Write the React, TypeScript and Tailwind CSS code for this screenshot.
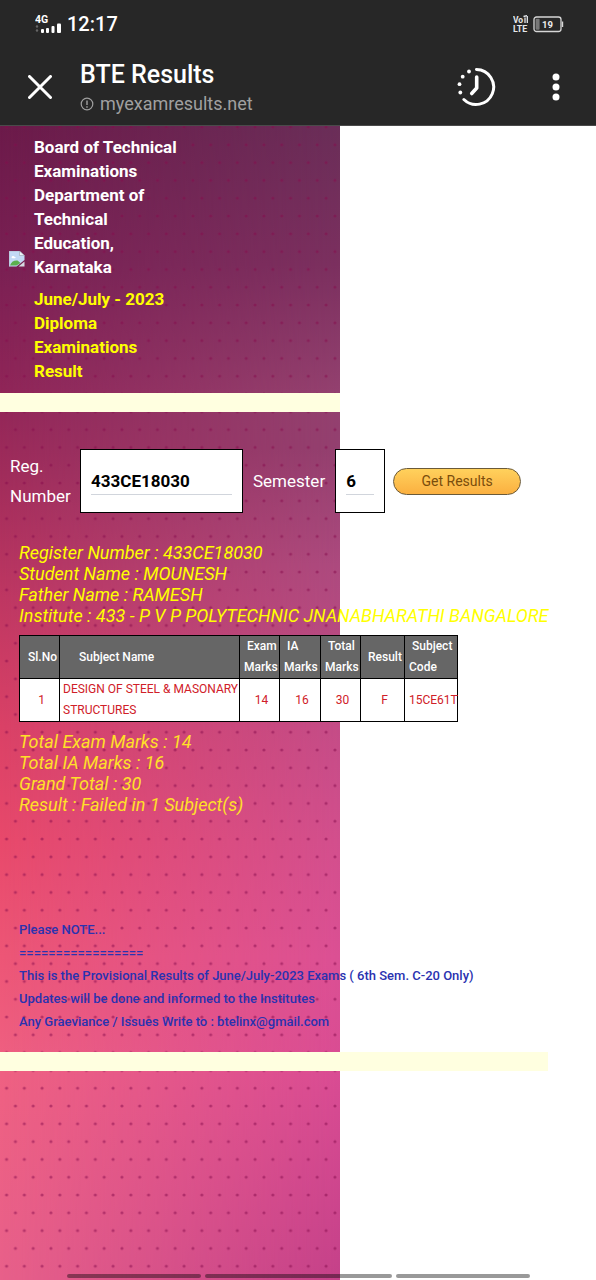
import React from "react";

const subjects = [
  { no: 1, name: "DESIGN OF STEEL & MASONARY STRUCTURES", exam: 14, ia: 16, total: 30, result: "F", code: "15CE61T" },
];

function SignalIcon() {
  return (
    <svg width="27" height="20" viewBox="0 0 27 20" aria-label="4G signal" className="text-white">
      <text x="0" y="9" fontSize="10.5" fontWeight="700" fill="currentColor">4G</text>
      <circle cx="2" cy="12.5" r="1.2" fill="#666" />
      <circle cx="2" cy="16.5" r="1.2" fill="#666" />
      <g fill="currentColor">
        <rect x="6" y="15" width="3" height="4" rx="1" />
        <rect x="11" y="14" width="3" height="5" rx="1" />
        <rect x="16.5" y="12" width="3" height="7" rx="1" />
        <rect x="22" y="9.5" width="4" height="9.5" rx="1" />
      </g>
    </svg>
  );
}

function VolteIcon() {
  return (
    <svg width="16" height="18" viewBox="0 0 16 18" aria-label="VoLTE" className="text-gray-200">
      <g fill="currentColor" fontWeight="700">
        <text x="0" y="8" fontSize="8.5">Vo</text>
        <text x="0" y="17" fontSize="8.8">LTE</text>
      </g>
      <g stroke="currentColor" strokeWidth="1.3" fill="none">
        <path d="M12 2.5v5.5M14.3 1v7M10.5 1.5l3.5-.8" />
      </g>
    </svg>
  );
}

function BatteryIcon() {
  return (
    <svg width="31" height="17" viewBox="0 0 31 17" aria-label="Battery 19 percent">
      <rect x="1" y="1" width="27" height="14.5" rx="2.5" fill="none" stroke="#d6d6d6" strokeWidth="1.3" />
      <rect x="2.6" y="2.8" width="4" height="11" rx="1" fill="#777" />
      <path d="M29.5 5.500v5.500" stroke="#d6d6d6" strokeWidth="1.4" />
      <text x="14.500" y="12" textAnchor="middle" fontSize="9.5" fontWeight="700" fill="#eee">19</text>
    </svg>
  );
}

function CloseIcon() {
  return (
    <svg width="24" height="24" viewBox="0 0 24 24" aria-hidden="true">
      <path d="M1.500 1.500l21 21M22.500 1.500l-21 21" stroke="#fff" strokeWidth="3" strokeLinecap="round" />
    </svg>
  );
}

function HistoryIcon() {
  return (
    <svg width="40" height="40" viewBox="0 0 40 40" aria-hidden="true">
      <g fill="none" stroke="#fff" strokeWidth="3" strokeLinecap="round" strokeLinejoin="round">
        <path d="M20.500 2.500a17.500 17.500 0 1 1-12.600 30" />
        <path d="M20.700 10v11l-5 5.500" strokeWidth="3.600" />
      </g>
      <g fill="#fff">
        <circle cx="13" cy="4.500" r="1.900" />
        <circle cx="6.700" cy="9.700" r="1.900" />
        <circle cx="3.500" cy="17.200" r="1.900" />
        <circle cx="4.300" cy="25.500" r="1.900" />
      </g>
    </svg>
  );
}

function MoreIcon() {
  return (
    <svg width="8" height="28" viewBox="0 0 8 28" aria-hidden="true">
      <g fill="#fff">
        <circle cx="4" cy="4" r="3.500" />
        <circle cx="4" cy="14" r="3.500" />
        <circle cx="4" cy="24" r="3.500" />
      </g>
    </svg>
  );
}

function InfoIcon() {
  return (
    <svg width="14" height="14" viewBox="0 0 14 14" aria-hidden="true">
      <circle cx="7" cy="7" r="5.800" fill="none" stroke="#a0a0a0" strokeWidth="1.200" />
      <path d="M7 3.500v4.500M7 9.300v1.400" stroke="#a0a0a0" strokeWidth="1.400" />
    </svg>
  );
}

function BrokenImageIcon() {
  return (
    <svg width="16" height="16" viewBox="0 0 16 16" role="img" aria-label="Board logo" className="shrink-0">
      <path d="M0 0h10.500l5 4.500V9L7.500 15.500H0z" fill="#c3d9f5" />
      <path d="M10.500 0v4.500h5z" fill="#eef4fb" stroke="#9aa3ad" strokeWidth=".6" />
      <path d="M2.500 6.500c0-1.600 2.400-2 2.900-.7 1.300-.3 1.900 1.500.3 1.500H3.300z" fill="#fff" />
      <path d="M1 14.500c1-3.500 4-5.500 7.500-5l3 2.400-4 2.600z" fill="#5cb04e" />
      <path d="M15.500 10.500v5h-6z" fill="#d5dbe2" />
      <path d="M0 15.500V0h10.500" fill="none" stroke="#aeb9c6" strokeWidth=".8" />
    </svg>
  );
}

function Backdrop() {
  return (
    <div className="absolute inset-y-0 left-0 -z-10 w-[57%] bg-[linear-gradient(to_bottom,#6c1a4a_0%,#7a2053_12%,#902558_23%,#a02c5b_30%,#bf3762_41%,#da4166_52%,#e8496b_62%,#ed5676_72%,#ef6182_82%,#e8608a_100%)]">
      <div className="absolute inset-0 bg-[linear-gradient(to_bottom,#6a2e58_0%,#7b305f_12%,#93416f_23%,#93406f_28%,#ac4a7e_38%,#c44c87_52%,#d24f8d_62%,#db5094_72%,#d94c93_82%,#c44189_100%)] [mask-image:linear-gradient(to_right,transparent,black)]" />
      <svg className="absolute inset-0 h-full w-full" aria-hidden="true">
        <defs>
          <pattern id="dots" x="-2.300" y="-7.900" width="17.750" height="35.600" patternUnits="userSpaceOnUse">
            <g fill="#850a4c" fillOpacity=".5">
              <circle cx="8.900" cy="8.900" r="1.600" />
              <path d="M0 25.100a1.600 1.600 0 0 1 0 3.200zM17.750 25.100a1.600 1.600 0 0 0 0 3.200z" />
            </g>
          </pattern>
        </defs>
        <rect width="100%" height="100%" fill="url(#dots)" />
      </svg>
    </div>
  );
}

const th = "border border-black px-1 text-left font-medium";
const td = "border border-black pr-1 pl-2 text-center";
const field = "block h-7 border-b border-gray-300 text-[17px] font-bold text-black outline-none";

export default function App() {
  return (
    <div className="flex min-h-screen flex-col bg-white font-['Roboto',sans-serif]">
      <header className="border-b border-[#4a4a4a] bg-[#272727] pb-2 text-white">
        <div className="flex h-12 items-center justify-between pr-8 pl-[35px]">
          <div className="flex items-center gap-[5px]">
            <SignalIcon />
            <span className="text-xl font-medium">12:17</span>
          </div>
          <div className="flex items-center gap-1">
            <VolteIcon />
            <BatteryIcon />
          </div>
        </div>
        <div className="flex h-[69px] items-center pr-9 pl-7">
          <button type="button" aria-label="Close" className="pt-2">
            <CloseIcon />
          </button>
          <div className="flex flex-1 flex-col pt-3 pl-7">
            <h1 className="text-[25px] leading-[30px] font-medium">BTE Results</h1>
            <p className="flex items-center gap-[6px] text-lg leading-7 text-[#a0a0a0]">
              <InfoIcon />
              myexamresults.net
            </p>
          </div>
          <button type="button" aria-label="History" className="pt-2">
            <HistoryIcon />
          </button>
          <button type="button" aria-label="More options" className="pt-2 pl-14">
            <MoreIcon />
          </button>
        </div>
      </header>

      <main className="relative isolate flex-1">
        <Backdrop />

        <section className="flex items-center gap-[9px] pt-[9px] pb-[10px] pl-[9px] text-[17px] leading-6 font-bold">
          <BrokenImageIcon />
          <div className="w-[150px]">
            <h2 className="text-white">Board of Technical Examinations Department of Technical Education, Karnataka</h2>
            <h3 className="mt-2 text-[#ffff00]">June/July - 2023 Diploma Examinations Result</h3>
          </div>
        </section>

        <div className="h-[19px] w-[57%] bg-[#ffffe0]" />

        <form className="flex items-center pt-[37px] pl-[10px] text-[17px] leading-[30px] text-white" onSubmit={(e) => e.preventDefault()}>
          <label htmlFor="reg" className="w-[70px]">
            Reg. Number
          </label>
          <div className="border border-black bg-white px-[10px] py-[17px]">
            <input id="reg" defaultValue="433CE18030" className={`${field} w-[141px]`} />
          </div>
          <label htmlFor="sem" className="px-[10px]">
            Semester
          </label>
          <div className="border border-black bg-white px-[10px] py-[17px]">
            <input id="sem" defaultValue="6" className={`${field} w-7`} />
          </div>
          <button type="submit" className="ml-2 h-[27px] w-32 rounded-full border border-[#6b5a38] bg-linear-to-b from-[#ffd15c] to-[#fbb040] text-sm text-[#7a4d0c]">
            Get Results
          </button>
        </form>

        <section className="pt-[29px] pl-[19px]">
          <div className="text-lg leading-[21px] whitespace-nowrap text-[#ffff00] italic">
            <p>Register Number : 433CE18030</p>
            <p>Student Name : MOUNESH</p>
            <p>Father Name : RAMESH</p>
            <p>Institute : 433 - P V P POLYTECHNIC JNANABHARATHI BANGALORE</p>
          </div>

          <table className="mt-[9px] w-[439px] table-fixed border-collapse border border-black text-xs leading-[21px]">
            <colgroup>
              <col className="w-10" />
              <col className="w-[180px]" />
              <col className="w-10" />
              <col className="w-[41px]" />
              <col className="w-10" />
              <col className="w-11" />
              <col className="w-[53px]" />
            </colgroup>
            <thead className="bg-[#666666] text-white">
              <tr>
                <th className="border border-black pl-2 text-left font-medium">Sl.No</th>
                <th className="border border-black pl-[19px] text-left font-medium">Subject Name</th>
                <th className={th}><span className="pl-[3px]">Exam</span> Marks</th>
                <th className={th}><span className="pl-[3px]">IA</span><br />Marks</th>
                <th className={th}><span className="pl-[3px]">Total</span> Marks</th>
                <th className="border border-black pl-[7px] text-left font-medium">Result</th>
                <th className={th}><span className="pl-[3px]">Subject</span> Code</th>
              </tr>
            </thead>
            <tbody className="bg-white text-[#d02028]">
              {subjects.map((s) => (
                <tr key={s.code}>
                  <td className={td}>{s.no}</td>
                  <td className="border border-black pr-0 pl-[3px] text-left">{s.name}</td>
                  <td className={td}>{s.exam}</td>
                  <td className={td}>{s.ia}</td>
                  <td className={td}>{s.total}</td>
                  <td className={td}>{s.result}</td>
                  <td className="border border-black pl-1 text-left">{s.code}</td>
                </tr>
              ))}
            </tbody>
          </table>

          <div className="mt-[9px] text-lg leading-[21px] whitespace-nowrap text-[#ffe028] italic">
            <p>Total Exam Marks : 14</p>
            <p>Total IA Marks : 16</p>
            <p>Grand Total : 30</p>
            <p>Result : Failed in 1 Subject(s)</p>
          </div>

          <div className="pt-[103px] pb-[19px] text-[13px] leading-[23px] font-medium whitespace-nowrap text-[#2a32b0]">
            <p>Please NOTE...</p>
            <p>=================</p>
            <p>This is the Provisional Results of June/July-2023 Exams ( 6th Sem. C-20 Only)</p>
            <p>Updates will be done and informed to the Institutes</p>
            <p>Any Graeviance / Issues Write to : btelinx@gmail.com</p>
          </div>
        </section>

        <div className="h-[19px] w-[92%] bg-[#ffffe0]" />

        <div className="absolute inset-x-0 bottom-[2px] flex gap-1 pr-[66px] pl-[67px]">
          <div className="h-1 flex-[5] rounded-full bg-black/40" />
          <div className="h-1 flex-[7] rounded-full bg-black/40" />
          <div className="h-1 flex-[5] rounded-full bg-black/40" />
        </div>
      </main>
    </div>
  );
}
